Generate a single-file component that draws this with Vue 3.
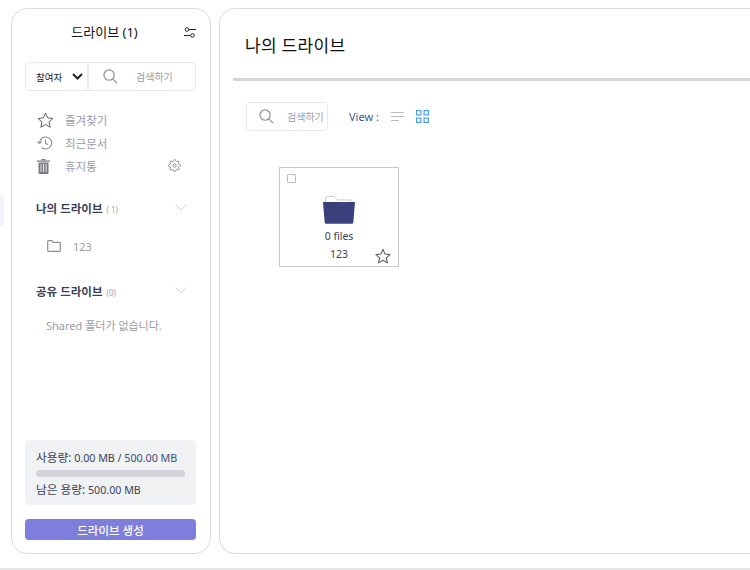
<script setup>
const menu = [
  { label: '즐겨찾기', icon: 'star' },
  { label: '최근문서', icon: 'history' },
  { label: '휴지통', icon: 'trash' },
]
</script>

<template>
  <div class="page">
    <div class="tab"></div>
    <div class="layout">
      <aside class="side">
        <header class="side-head">
          <span class="side-title">드라이브 (1)</span>
          <svg class="sliders" width="12" height="11" viewBox="0 0 12 11" fill="none" stroke="#222" stroke-width="1">
            <path d="M5 2.500H12M0 8.500H6" />
            <circle cx="3" cy="2.500" r="1.800" />
            <circle cx="8.500" cy="8.500" r="1.800" />
          </svg>
        </header>

        <div class="filter">
          <div class="select">
            <span>참여자</span>
            <svg width="11" height="7" viewBox="0 0 11 7" fill="none" stroke="#222" stroke-width="2"><path d="M1 1l4.500 4.500L10 1" /></svg>
          </div>
          <div class="search grow">
            <svg width="15" height="15" viewBox="0 0 16 16" fill="none" stroke="#8f9299" stroke-width="1.300"><circle cx="6.500" cy="6.500" r="5.500" /><path d="M10.500 10.500L15 15" /></svg>
            <span>검색하기</span>
          </div>
        </div>

        <ul class="menu">
          <li v-for="m in menu" :key="m.label">
            <span class="mi">
              <svg v-if="m.icon === 'star'" width="17" height="16" viewBox="0 0 17 16" fill="none" stroke="#5c6068" stroke-width="1" stroke-linejoin="round"><path d="M8.500 1l2.200 4.900 5.300.6-4 3.500 1.200 5.300-4.700-2.800-4.700 2.800L5 10 1 6.500l5.300-.6z" /></svg>
              <svg v-else-if="m.icon === 'history'" width="16" height="14" viewBox="0 0 16 14" fill="none" stroke="#8a8e96" stroke-width="1.100"><path d="M2.600 7A6 6 0 1 1 4.600 11.500" /><path d="M0.600 5.400L2.600 7.400L4.600 5.400" /><path d="M8.600 3.500V7.300L11 8.700" /></svg>
              <svg v-else width="13" height="16" viewBox="0 0 13 16" fill="#7a7d84"><path d="M0 2.500h13v1.200H0zM4.500 1h4v1.500h-1V2h-2v.5h-1zM1.500 4.500h10V15a1 1 0 0 1-1 1h-8a1 1 0 0 1-1-1z" /><path d="M4 6v8M6.500 6v8M9 6v8" stroke="#fff" stroke-width=".8" fill="none" /></svg>
            </span>
            <span class="ml">{{ m.label }}</span>
            <svg v-if="m.icon === 'trash'" class="gear" width="13" height="13" viewBox="0 0 24 24" fill="none" stroke="#83868d" stroke-width="1.800"><circle cx="12" cy="12" r="3" /><path d="M19.4 15a1.65 1.65 0 0 0 .33 1.82l.06.06a2 2 0 0 1 0 2.83 2 2 0 0 1-2.83 0l-.06-.06a1.65 1.65 0 0 0-1.82-.33 1.65 1.65 0 0 0-1 1.51V21a2 2 0 0 1-2 2 2 2 0 0 1-2-2v-.09A1.65 1.65 0 0 0 9 19.4a1.65 1.65 0 0 0-1.82.33l-.06.06a2 2 0 0 1-2.83 0 2 2 0 0 1 0-2.83l.06-.06a1.65 1.65 0 0 0 .33-1.82 1.65 1.65 0 0 0-1.51-1H3a2 2 0 0 1-2-2 2 2 0 0 1 2-2h.09A1.65 1.65 0 0 0 4.600 9a1.65 1.65 0 0 0-.33-1.82l-.06-.06a2 2 0 0 1 0-2.83 2 2 0 0 1 2.83 0l.06.06a1.65 1.65 0 0 0 1.82.33H9a1.65 1.65 0 0 0 1-1.51V3a2 2 0 0 1 2-2 2 2 0 0 1 2 2v.09a1.65 1.65 0 0 0 1 1.51 1.65 1.65 0 0 0 1.82-.33l.06-.06a2 2 0 0 1 2.83 0 2 2 0 0 1 0 2.83l-.06.06a1.65 1.65 0 0 0-.33 1.82V9a1.65 1.65 0 0 0 1.51 1H21a2 2 0 0 1 2 2 2 2 0 0 1-2 2h-.09a1.65 1.65 0 0 0-1.51 1z" /></svg>
          </li>
        </ul>

        <section class="group first">
          <div class="group-head">
            <b>나의 드라이브</b><small>( 1)</small>
            <svg class="chev" width="12" height="7" viewBox="0 0 12 7" fill="none" stroke="#d4d5d9" stroke-width="1"><path d="M.5.500l5.500 5.500L11.500.500" /></svg>
          </div>
          <div class="folder-row">
            <svg width="14" height="12" viewBox="0 0 14 12" fill="none" stroke="#8d9096" stroke-width="1.200"><path d="M.7 1.500a.8.800 0 0 1 .8-.8h3.300l1.400 1.600h6.300a.8.800 0 0 1 .8.800v7.400a.8.800 0 0 1-.8.800H1.500a.8.800 0 0 1-.8-.8z" /></svg>
            <span>123</span>
          </div>
        </section>

        <section class="group second">
          <div class="group-head">
            <b>공유 드라이브</b><small>(0)</small>
            <svg class="chev" width="12" height="7" viewBox="0 0 12 7" fill="none" stroke="#d4d5d9" stroke-width="1"><path d="M.5.500l5.500 5.500L11.500.500" /></svg>
          </div>
          <p class="empty">Shared 폴더가 없습니다.</p>
        </section>

        <div class="usage">
          <p><span class="ko">사용량:</span> 0.00 MB / <span class="blue">500.00 MB</span></p>
          <div class="bar"></div>
          <p><span class="ko">남은 용량:</span> 500.00 MB</p>
        </div>
        <button class="create">드라이브 생성</button>
      </aside>

      <main class="main">
        <h1 class="main-title">나의 드라이브</h1>
        <div class="rule"></div>
        <div class="tools">
          <div class="search small">
            <svg width="15" height="15" viewBox="0 0 16 16" fill="none" stroke="#8f9299" stroke-width="1.300"><circle cx="6.500" cy="6.500" r="5.500" /><path d="M10.500 10.500L15 15" /></svg>
            <span>검색하기</span>
          </div>
          <span class="view">View :</span>
          <svg class="list-ic" width="13" height="9" viewBox="0 0 13 9" stroke="#bcbcbc" stroke-width="1"><path d="M0 .5h13M0 4.500h13M0 8.500h8" /></svg>
          <svg class="grid-ic" width="13" height="13" viewBox="0 0 13 13" fill="none" stroke="#4a9fe8" stroke-width="1.200"><rect x=".6" y=".6" width="4.300" height="4.300" /><rect x="8.100" y=".6" width="4.300" height="4.300" /><rect x=".6" y="8.100" width="4.300" height="4.300" /><rect x="8.100" y="8.100" width="4.300" height="4.300" /></svg>
        </div>

        <div class="card">
          <span class="check"></span>
          <svg class="big-folder" width="32" height="28" viewBox="0 0 32 28">
            <path d="M2.500 8V1.500a1 1 0 0 1 1-1h8l3 3.500h13.500a1 1 0 0 1 1 1v3" fill="#fff" stroke="#c9cbe0" stroke-width="1" />
            <path d="M0 6h32l-1.700 20.500a1.500 1.500 0 0 1-1.500 1.300H3.200a1.500 1.500 0 0 1-1.500-1.300z" fill="#3b3f7c" />
          </svg>
          <div class="files">0 files</div>
          <div class="name">123</div>
          <svg class="card-star" width="16" height="16" viewBox="0 0 17 16" fill="none" stroke="#5f6166" stroke-width="1.200" stroke-linejoin="round"><path d="M8.500 1l2.200 4.900 5.300.6-4 3.500 1.200 5.300-4.700-2.800-4.700 2.800L5 10 1 6.500l5.300-.6z" /></svg>
        </div>
      </main>
    </div>
    <div class="foot"></div>
  </div>
</template>

<style>
html, body { margin: 0; background: #fff; overflow: hidden; }
</style>

<style scoped>
.page {
  position: relative;
  width: 750px;
  height: 570px;
  overflow: hidden;
  background: #fff;
  font-family: "Noto Sans", "Noto Sans CJK KR", sans-serif;
  color: #3b4253;
  font-size: 11px;
}
.tab {
  position: absolute;
  left: 0;
  top: 194px;
  width: 4px;
  height: 33px;
  background: #f1f2fa;
  border-radius: 0 4px 4px 0;
}
.layout {
  display: flex;
  gap: 8px;
  padding: 8px 0 0 11px;
  height: 547px;
  box-sizing: content-box;
}
.side {
  flex: none;
  width: 200px;
  height: 546px;
  box-sizing: border-box;
  border: 1px solid #dcdcdc;
  border-radius: 16px;
  padding: 0 14px 13px 13px;
  display: flex;
  flex-direction: column;
}
.side-head {
  display: flex;
  align-items: center;
  justify-content: center;
  height: 44px;
  padding-right: 12px;
  position: relative;
}
.side-title { font-size: 13px; color: #111; }
.sliders { position: absolute; right: 0; top: 18px; }
.filter {
  display: flex;
  margin-top: 9px;
  height: 29px;
  border: 1px solid #e9eaee;
  border-radius: 4px;
  box-sizing: border-box;
}
.select {
  width: 63px;
  flex: none;
  box-sizing: border-box;
  display: flex;
  align-items: center;
  justify-content: space-between;
  padding: 0 4px 0 10px;
  font-size: 9.500px;
  color: #222;
  border-right: 2px solid #e9eaee;
}
.search {
  display: flex;
  align-items: center;
  color: #9a9ca6;
  font-size: 10px;
}
.search.grow { flex: 1; padding-left: 14px; gap: 18px; }
.menu {
  list-style: none;
  margin: 17px 0 0;
  padding: 0 0 0 12px;
}
.menu li {
  display: flex;
  align-items: center;
  height: 23px;
  position: relative;
  color: #9a9ca6;
  font-size: 11.500px;
}
.mi { width: 28px; flex: none; display: flex; }
.gear { position: absolute; right: 15px; top: 5px; }
.group-head {
  display: flex;
  align-items: center;
  height: 20px;
  position: relative;
}
.group-head b { font-size: 11.500px; font-weight: 700; color: #3b4253; }
.group-head small { font-size: 8px; color: #a3a5ad; margin-left: 4px; margin-top: 2px; }
.chev { position: absolute; right: 9px; top: 6px; }
.first { margin-top: 21px; padding-left: 11px; }
.folder-row {
  display: flex;
  align-items: center;
  gap: 12px;
  margin-top: 18px;
  padding-left: 11px;
  height: 20px;
  color: #9a9ca6;
}
.second { margin-top: 25px; padding-left: 11px; }
.empty {
  margin: 15px 0 0;
  padding-left: 10px;
  color: #9a9ca6;
  font-size: 11px;
  line-height: 20px;
  white-space: nowrap;
}
.usage {
  margin-top: auto;
  background: #f1f2f4;
  border-radius: 4px;
  height: 65px;
  box-sizing: border-box;
  padding: 9px 11px 0;
}
.usage p {
  margin: 0;
  font-size: 10.700px;
  line-height: 17px;
  color: #3b4253;
  white-space: nowrap;
}
.ko { font-size: 11.700px; }
.blue { color: #3b4f73; }
.bar {
  height: 7px;
  border-radius: 4px;
  background: #d2d3da;
  margin: 3px 0 4px;
}
.create {
  margin-top: 14px;
  height: 21px;
  border: 0;
  padding: 0;
  border-radius: 4px;
  background: #7e7edc;
  color: #fff;
  font: 500 11.500px "Noto Sans", "Noto Sans CJK KR", sans-serif;
}
.main {
  flex: none;
  width: 560px;
  height: 546px;
  box-sizing: border-box;
  border: 1px solid #dcdcdc;
  border-radius: 16px 0 0 16px;
  border-right: 0;
  padding-left: 13px;
}
.main-title {
  margin: 0;
  padding: 26px 0 0 12px;
  height: 69px;
  box-sizing: border-box;
  font-size: 17px;
  line-height: 22px;
  letter-spacing: .3px;
  font-weight: 400;
  color: #111;
}
.rule { height: 3px; background: #d6d6d6; }
.tools {
  display: flex;
  align-items: center;
  margin-top: 21px;
  padding-left: 13px;
}
.search.small {
  width: 82px;
  height: 29px;
  box-sizing: border-box;
  border: 1px solid #e9eaee;
  border-radius: 4px;
  padding-left: 12px;
  gap: 13px;
  overflow: hidden;
  white-space: nowrap;
}
.view { margin-left: 21px; color: #3a5a8c; font-size: 11px; }
.list-ic { margin-left: 12px; }
.grid-ic { margin-left: 12px; }
.card {
  position: relative;
  margin: 36px 0 0 46px;
  width: 120px;
  height: 100px;
  box-sizing: border-box;
  border: 1px solid #c8c8c8;
  display: flex;
  flex-direction: column;
  align-items: center;
}
.check {
  position: absolute;
  left: 7px;
  top: 6px;
  width: 7px;
  height: 7px;
  border: 1px solid #bdbdbd;
  border-radius: 1px;
}
.big-folder { margin-top: 28px; }
.files { font-size: 10.500px; line-height: 14px; margin-top: 5px; color: #3b4253; }
.name { font-size: 10.500px; line-height: 14px; margin-top: 4px; color: #3b4253; }
.card-star { position: absolute; right: 7px; bottom: 2px; }
.foot {
  position: absolute;
  left: 0;
  right: 0;
  bottom: 0;
  height: 2px;
  background: #e4e4ea;
}
</style>
